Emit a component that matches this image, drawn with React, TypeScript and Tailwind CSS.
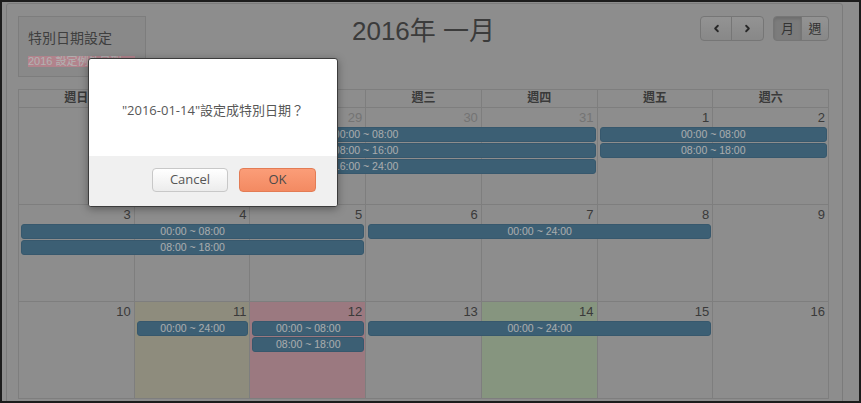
import { ChevronLeft, ChevronRight } from 'lucide-react';

type Day = { n: number; faded?: boolean; bg?: string };
type Ev = { row: number; start: number; span: number; label: string };

const COL_START = ['col-start-1', 'col-start-2', 'col-start-3', 'col-start-4', 'col-start-5', 'col-start-6', 'col-start-7'];
const COL_SPAN = ['col-span-1', 'col-span-2', 'col-span-3', 'col-span-4', 'col-span-5'];
const ROW_START = ['row-start-2', 'row-start-3', 'row-start-4'];

const HEADERS = ['週日', '週一', '週二', '週三', '週四', '週五', '週六'];

const WEEKS: { days: Day[]; events: Ev[] }[] = [
  {
    days: [
      { n: 27, faded: true },
      { n: 28, faded: true },
      { n: 29, faded: true },
      { n: 30, faded: true },
      { n: 31, faded: true },
      { n: 1 },
      { n: 2 },
    ],
    events: [
      { row: 0, start: 1, span: 4, label: '00:00 ~ 08:00' },
      { row: 1, start: 1, span: 4, label: '08:00 ~ 16:00' },
      { row: 2, start: 1, span: 4, label: '16:00 ~ 24:00' },
      { row: 0, start: 5, span: 2, label: '00:00 ~ 08:00' },
      { row: 1, start: 5, span: 2, label: '08:00 ~ 18:00' },
    ],
  },
  {
    days: [{ n: 3 }, { n: 4 }, { n: 5 }, { n: 6 }, { n: 7 }, { n: 8 }, { n: 9 }],
    events: [
      { row: 0, start: 0, span: 3, label: '00:00 ~ 08:00' },
      { row: 1, start: 0, span: 3, label: '08:00 ~ 18:00' },
      { row: 0, start: 3, span: 3, label: '00:00 ~ 24:00' },
    ],
  },
  {
    days: [
      { n: 10 },
      { n: 11, bg: 'bg-[#ccc9b4]' },
      { n: 12, bg: 'bg-[#dfaeb8]' },
      { n: 13 },
      { n: 14, bg: 'bg-[#c1d6b7]' },
      { n: 15 },
      { n: 16 },
    ],
    events: [
      { row: 0, start: 1, span: 1, label: '00:00 ~ 24:00' },
      { row: 0, start: 2, span: 1, label: '00:00 ~ 08:00' },
      { row: 1, start: 2, span: 1, label: '08:00 ~ 18:00' },
      { row: 0, start: 3, span: 3, label: '00:00 ~ 24:00' },
    ],
  },
];

function Toolbar() {
  return (
    <div className="flex items-start h-[61px] mb-[12px]">
      <div className="flex-1">
        <div className="w-[128px] h-[61px] border border-[#b3b3b3] bg-[#c4c4c4] pl-[9px] pt-[11px]">
          <div className="text-[14px] leading-[20px] text-[#5b5b5b]">特別日期設定</div>
          <div className="mt-2 w-[107px] h-[11px] bg-[#ffbcc9] text-[11px] leading-[11px] text-white whitespace-nowrap overflow-hidden">
            2016 設定例外日期
          </div>
        </div>
      </div>
      <h2 className="text-[26px] leading-[30px] text-[#555]">2016年 一月</h2>
      <div className="flex-1 flex justify-end">
        <div className="flex">
          <button className="w-[32px] h-[25px] flex items-center justify-center border border-[#a9a9a9] rounded-l-[4px] bg-gradient-to-b from-[#d3d3d3] to-[#c3c3c3] text-[#3a3a3a]">
            <ChevronLeft size={11} strokeWidth={4} />
          </button>
          <button className="-ml-px w-[33px] h-[25px] flex items-center justify-center border border-[#a9a9a9] rounded-r-[4px] bg-gradient-to-b from-[#d3d3d3] to-[#c3c3c3] text-[#3a3a3a]">
            <ChevronRight size={11} strokeWidth={4} />
          </button>
        </div>
        <div className="flex ml-[9px]">
          <button className="w-[29px] h-[25px] border border-[#a9a9a9] rounded-l-[4px] bg-[#b2b2b2] text-[13px] text-[#4a4a4a] shadow-[inset_0_2px_3px_rgba(0,0,0,0.12)]">
            月
          </button>
          <button className="-ml-px w-[28px] h-[25px] border border-[#a9a9a9] rounded-r-[4px] bg-gradient-to-b from-[#d3d3d3] to-[#c3c3c3] text-[13px] text-[#4a4a4a]">
            週
          </button>
        </div>
      </div>
    </div>
  );
}

function Week({ days, events }: { days: Day[]; events: Ev[] }) {
  return (
    <div className="grid grid-cols-7 grid-rows-[19px_16px_16px_16px_1fr] h-[97px]">
      {days.map((d, i) => (
        <div
          key={'c' + i}
          className={`row-span-full ${COL_START[i]} border-r border-b border-[#b5b5b5] ${d.bg ?? ''}`}
        />
      ))}
      {days.map((d, i) => (
        <div
          key={'n' + i}
          className={`row-start-1 ${COL_START[i]} text-right pr-[4px] pt-[2px] text-[13px] leading-[16px] ${d.faded ? 'text-[#a6a6a6]' : 'text-[#545454]'}`}
        >
          {d.n}
        </div>
      ))}
      {events.map((e, i) => (
        <div key={'e' + i} className={`${ROW_START[e.row]} ${COL_START[e.start]} ${COL_SPAN[e.span - 1]} px-[2px]`}>
          <div className="h-[15px] rounded-[3px] bg-[#5789a7] border border-[#4f7f9c] text-[#f2f6f8] text-[10.5px] leading-[13px] text-center whitespace-nowrap overflow-hidden">
            {e.label}
          </div>
        </div>
      ))}
    </div>
  );
}

function Calendar() {
  return (
    <div className="w-[811px] border-l border-[#b5b5b5]">
      <div className="grid grid-cols-7 border-t border-[#b5b5b5]">
        {HEADERS.map((h) => (
          <div key={h} className="h-[18px] border-r border-b border-[#b5b5b5] text-center text-[12px] leading-[17px] font-bold text-[#535353]">
            {h}
          </div>
        ))}
      </div>
      {WEEKS.map((w, i) => (
        <Week key={i} days={w.days} events={w.events} />
      ))}
    </div>
  );
}

function ConfirmDialog() {
  return (
    <div className="absolute left-[86px] top-[56px] w-[250px] border border-[#3c3c3c] rounded-[3px] bg-white overflow-hidden shadow-[0_2px_8px_rgba(0,0,0,0.35)] font-['Open_Sans','Noto_Sans_CJK_TC',sans-serif]">
      <div className="h-[97px] flex items-center justify-center pt-[6px] text-[13px] text-[#575757]">
        "2016-01-14"設定成特別日期？
      </div>
      <div className="bg-[#f0f0f0] flex justify-end gap-[11px] pr-[21px] pt-[12px] pb-[14px]">
        <button className="w-[76px] h-[24px] rounded-[4px] border border-[#c8c8c8] bg-gradient-to-b from-[#ffffff] to-[#ececec] text-[13px] text-[#555]">
          Cancel
        </button>
        <button className="w-[77px] h-[24px] rounded-[4px] border border-[#e37c55] bg-gradient-to-b from-[#fb9d78] to-[#f38a62] text-[13px] text-[#4a4a4a]">
          OK
        </button>
      </div>
    </div>
  );
}

export default function App() {
  return (
    <div className="relative w-[861px] h-[403px] overflow-hidden border-2 border-[#1c1c1c] bg-[#cacaca] font-['Liberation_Sans','Noto_Sans_CJK_TC',sans-serif]">
      <div className="ml-[4px] mt-[1px] w-[837px] h-[420px] border border-[#b1b1b1] rounded-[3px] pl-[11px] pr-[13px] pt-[12px]">
        <Toolbar />
        <Calendar />
      </div>
      {/* modal backdrop */}
      <div className="absolute inset-0 bg-black/30" />
      <ConfirmDialog />
    </div>
  );
}
